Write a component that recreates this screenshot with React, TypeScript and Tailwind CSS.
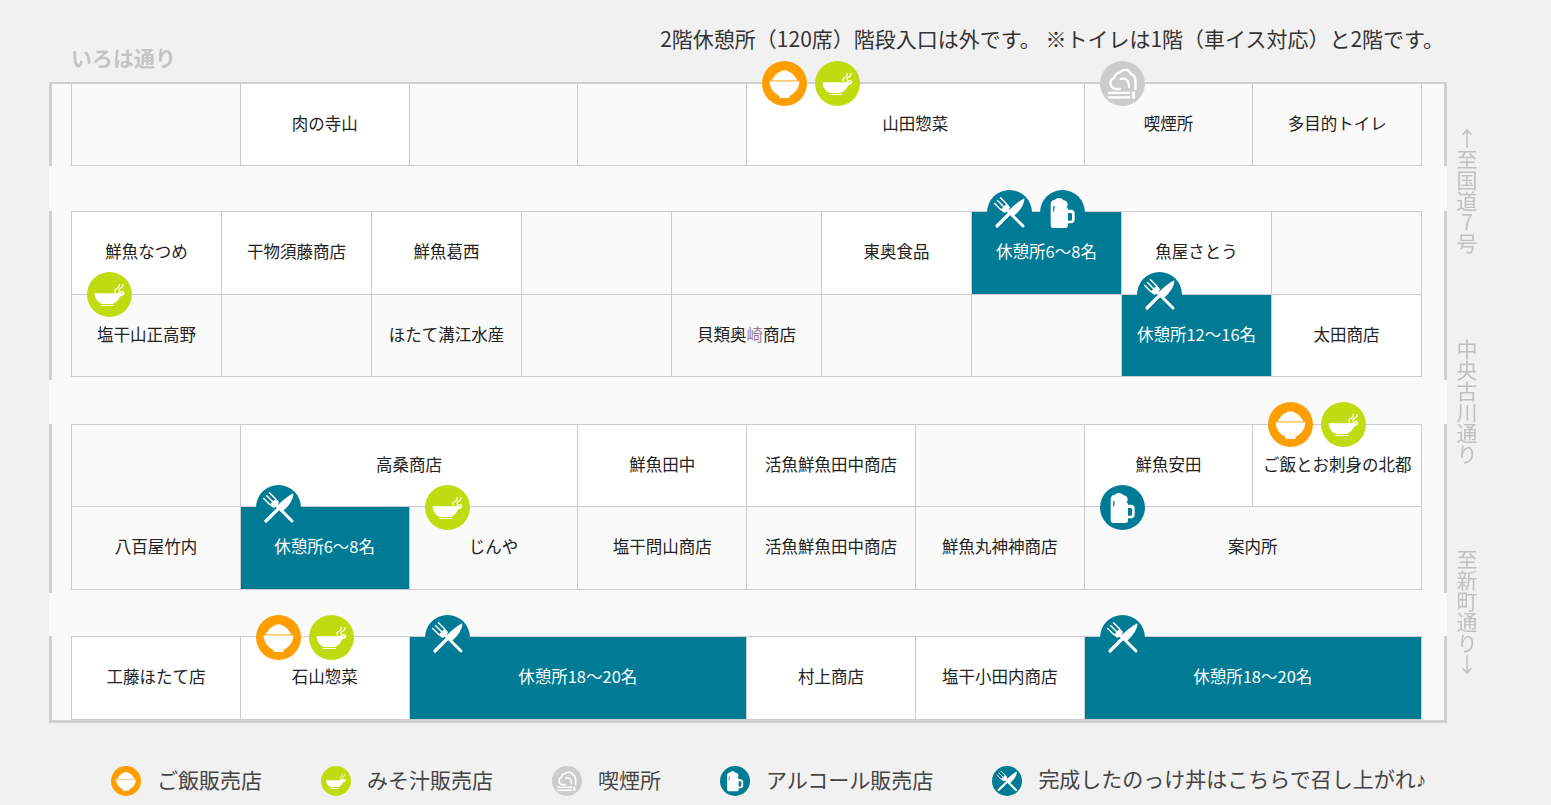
type IconKind = 'rice' | 'soup' | 'smoke' | 'beer' | 'fork'

const iconBg: Record<IconKind, string> = {
  rice: 'bg-[#ff9e00]',
  soup: 'bg-[#bfdc10]',
  smoke: 'bg-[#cccccc]',
  beer: 'bg-[#007b96]',
  fork: 'bg-[#007b96]'
}

function Glyph({ kind }: { kind: IconKind }) {
  if (kind === 'rice') {
    return (
      <svg viewBox="0 0 45 45" className="w-full h-full">
        <path fill="#fff" d="M10 19.500c.2-1.800 1-3 2.300-3.600.2-1.400 1-2.400 2.200-2.700.6-1.400 1.800-2.200 3-2 1-1.300 3-2 5-2s4 .7 5 2c1.200-.2 2.400.6 3 2 1.200.3 2 1.300 2.200 2.700 1.300.6 2.100 1.800 2.300 3.600z" />
        <path fill="#ffc772" d="M8 19.500h29v1H8z" />
        <path fill="#fff" d="M7.500 20.500h30c-.5 6.500-4 11.500-9.800 14.300l-.5 2.200h-9.400l-.5-2.200C11.500 32 8 27 7.500 20.500z" />
      </svg>
    )
  }
  if (kind === 'soup') {
    return (
      <svg viewBox="0 0 45 45" className="w-full h-full">
        <path fill="#fff" d="M7.500 21.300h20.800c2.100 0 3.200-.6 4.300-1.400 1.200-.9 3-1.300 4-.4 1.100 1 .9 2.700-.3 3.600-1 .8-2.100 1.200-3.300 1.400-1.300 3.600-4 6.300-7.700 7.500H15.200c-4.500-1.400-7.300-5.500-7.700-10.700zm26.100.5c1-.1 1.700-.5 2.200-1 .4-.5-.2-1-.9-.6-.5.3-.9.7-1.300.8z" />
        <path fill="#fff" d="M13.500 33h14c-.6.800-1.300 1-2.200 1h-9.600c-.9 0-1.700-.3-2.200-1z" />
        <path fill="none" stroke="#fff" strokeWidth="1.200" strokeLinecap="round" d="M28.500 20c-1.800-1.600 0-2.900 1.700-3.800 1.800-1 2.800-2.200 1.700-3.800M32.300 19c-1.200-1.400.4-2.300 1.700-3.100 1.400-.9 2.600-1.900 1.900-3.400" />
      </svg>
    )
  }
  if (kind === 'smoke') {
    return (
      <svg viewBox="0 0 45 45" className="w-full h-full">
        <path fill="none" stroke="#fff" strokeWidth="2.400" strokeLinecap="round" strokeLinejoin="round" d="M20 28h-3c-4 0-6.500-2.700-6.500-5.800 0-2.700 1.700-4.900 4-5.600.3-3 2.800-5 5.500-5 1.200-1.700 3-2.700 5-2.700 3 0 5.300 1.800 6 4.300 2.800.8 4.500 3.500 4.500 6.700v8" />
        <path fill="none" stroke="#fff" strokeWidth="2.200" strokeLinecap="round" d="M20.500 18c2.700-.8 5.700 0 7.200 2 1 1.300 1.300 3 1.300 6.500" />
        <path fill="#fff" d="M8 30.700h22v2.300H8zM8 35.300h22v2.300H8zM32 30.700h3v6.900h-3z" />
      </svg>
    )
  }
  if (kind === 'beer') {
    return (
      <svg viewBox="0 0 45 45" className="w-full h-full">
        <path fill="#fff" fillRule="evenodd" d="M10.700 14c0-2.500 2-4.200 4.300-4.200 1-1.300 2.600-1.800 4-1.800 1.800 0 3.400.9 4.300 2.300 2.500 0 4.400 1.800 4.400 3.900 0 1.300-.5 2.300-1.300 3.100.9.200 1.600.9 1.600 1.900v.5h3.200c2 0 3.500 1.500 3.500 3.500v6.500c0 2-1.500 3.500-3.500 3.500H28v2.300c0 1.300-1.100 2.400-2.400 2.400H13.100c-1.300 0-2.400-1.100-2.400-2.400zm17.300 9v7.800h2.500c.9 0 1.500-.6 1.500-1.500v-4.800c0-.9-.6-1.500-1.500-1.500z" />
        <path fill="none" stroke="#007b96" strokeWidth="1.300" strokeLinecap="round" d="M14 16.500c-.2 1.500-.3 3-.3 4.300" />
      </svg>
    )
  }
  return (
    <svg viewBox="0 0 45 45" className="w-full h-full">
      <path fill="none" stroke="#fff" strokeWidth="3" strokeLinecap="round" d="M18 18l18 18" />
      <path fill="none" stroke="#fff" strokeWidth="1.500" strokeLinecap="round" d="M10.500 10.500l6 6M13.500 7.700l6 6M7.700 13.500l6 6" />
      <path fill="#fff" d="M19.800 13.500l-6.300 6.300 2.800 2.500c.9.700 2 .6 2.800-.2l3.100-3.100c.8-.8.900-1.900.2-2.700z" />
      <path fill="none" stroke="#fff" strokeWidth="3.200" strokeLinecap="round" d="M10 36l14-14" />
      <path fill="#fff" d="M21.500 20.500C26.500 15.500 32 11 37.300 8.300c.4 5.500-4.300 13-11.300 18.200z" />
    </svg>
  )
}

function Badge({ kind, left, up }: { kind: IconKind; left: string; up: boolean }) {
  return (
    <span className={`absolute ${up ? 'top-[-23px]' : 'top-[-22px]'} ${left} z-10 w-[45px] h-[45px] rounded-full ${iconBg[kind]}`}>
      <Glyph kind={kind} />
    </span>
  )
}

type CellProps = {
  label?: React.ReactNode
  span?: string
  tone?: 'white' | 'plain' | 'teal'
  icons?: IconKind[]
  up?: boolean
}

function Cell({ label, span = '', tone = 'plain', icons = [], up = false }: CellProps) {
  const toneClass =
    tone === 'white' ? 'bg-white text-[#222]' : tone === 'teal' ? 'bg-[#007b96] text-white' : 'bg-[#fafafa] text-[#222]'
  return (
    <div className={`relative flex items-center justify-center pb-[3px] border-r border-b border-[#cccccc] ${toneClass} ${span}`}>
      {icons[0] && <Badge kind={icons[0]} left="left-[15px]" up={up} />}
      {icons[1] && <Badge kind={icons[1]} left="left-[68px]" up={up} />}
      {label}
    </div>
  )
}

function LegendItem({ kind, children, className = '' }: { kind: IconKind; children: React.ReactNode; className?: string }) {
  return (
    <div className={`flex items-center gap-[16px] ${className}`}>
      <span className={`w-[30px] h-[30px] rounded-full ${iconBg[kind]}`}>
        <Glyph kind={kind} />
      </span>
      <span className="pb-[3px]">{children}</span>
    </div>
  )
}

export default function App() {
  return (
    <div className="w-[1551px] h-[805px] overflow-hidden bg-[#f1f1f1] font-['Noto_Sans_CJK_JP','Noto_Sans',sans-serif] text-[16.5px] leading-none">
      <div className="flex justify-end pt-[25px] pr-[107px] h-[82px] text-[21px] leading-[26px] text-[#333]">
        <p>2階休憩所（120席）階段入口は外です。 ※トイレは1階（車イス対応）と2階です。</p>
      </div>

      <div className="relative ml-[49px] w-[1398px] border-[3px] border-t-2 border-[#d0d0d0] bg-[#fafafa]">
        <span className="absolute left-[19px] top-[-40px] text-[21px] font-bold leading-[26px] text-[#c4c4c4] blur-[0.6px]">いろは通り</span>

        <div className="pl-[19px] pr-[22px]">
          <div className="grid grid-cols-8 h-[82px] border-l border-[#cccccc]">
            <Cell />
            <Cell tone="white" label="肉の寺山" />
            <Cell />
            <Cell />
            <Cell tone="white" span="col-span-2" label="山田惣菜" icons={['rice', 'soup']} up />
            <Cell label="喫煙所" icons={['smoke']} up />
            <Cell label="多目的トイレ" />
          </div>

          <div className="h-[45px] bg-[#fafafa] ml-[-22px] mr-[-25px]" />

          <div className="grid grid-cols-9 grid-rows-2 h-[166px] border-l border-t border-[#cccccc]">
            <Cell tone="white" label="鮮魚なつめ" />
            <Cell tone="white" label="干物須藤商店" />
            <Cell tone="white" label="鮮魚葛西" />
            <Cell />
            <Cell />
            <Cell tone="white" label="東奥食品" />
            <Cell tone="teal" label="休憩所6～8名" icons={['fork', 'beer']} />
            <Cell tone="white" label="魚屋さとう" />
            <Cell />
            <Cell label="塩干山正高野" icons={['soup']} up />
            <Cell />
            <Cell label="ほたて溝江水産" />
            <Cell />
            <Cell label={<span>貝類奥<span className="text-[#a07a9a]">崎</span>商店</span>} />
            <Cell />
            <Cell />
            <Cell tone="teal" label="休憩所12～16名" icons={['fork']} up />
            <Cell tone="white" label="太田商店" />
          </div>

          <div className="mt-[3px] h-[44px] bg-[#fafafa] ml-[-22px] mr-[-25px]" />

          <div className="grid grid-cols-8 grid-rows-[82px_83px] h-[166px] border-l border-t border-[#cccccc]">
            <Cell />
            <Cell tone="white" span="col-span-2" label="高桑商店" />
            <Cell tone="white" label="鮮魚田中" />
            <Cell tone="white" label="活魚鮮魚田中商店" />
            <Cell />
            <Cell tone="white" label="鮮魚安田" />
            <Cell tone="white" label="ご飯とお刺身の北都" icons={['rice', 'soup']} up />
            <Cell label="八百屋竹内" />
            <Cell tone="teal" label="休憩所6～8名" icons={['fork']} />
            <Cell label="じんや" icons={['soup']} />
            <Cell label="塩干問山商店" />
            <Cell label="活魚鮮魚田中商店" />
            <Cell label="鮮魚丸神神商店" />
            <Cell span="col-span-2" label="案内所" icons={['beer']} />
          </div>

          <div className="mt-[3px] h-[43px] bg-[#fafafa] ml-[-22px] mr-[-25px]" />

          <div className="grid grid-cols-8 h-[84px] border-l border-t border-[#cccccc]">
            <Cell tone="white" label="工藤ほたて店" />
            <Cell tone="white" label="石山惣菜" icons={['rice', 'soup']} />
            <Cell tone="teal" span="col-span-2" label="休憩所18～20名" icons={['fork']} />
            <Cell tone="white" label="村上商店" />
            <Cell tone="white" label="塩干小田内商店" />
            <Cell tone="teal" span="col-span-2" label="休憩所18～20名" icons={['fork']} />
          </div>
        </div>

        <div className="absolute left-full top-[44px] ml-[10px] flex flex-col items-center w-[26px] text-[21px] leading-[26px] text-[#c0c0c0] blur-[0.3px]">
          <span className="h-[127px] [writing-mode:vertical-rl] [text-orientation:upright]">↑至国道7号</span>
          <span className="mt-[84px] h-[127px] [writing-mode:vertical-rl] [text-orientation:upright]">中央古川通り</span>
          <span className="mt-[83px] h-[127px] [writing-mode:vertical-rl] [text-orientation:upright]">至新町通り↓</span>
        </div>
      </div>

      <div className="flex items-center mt-[40px] pl-[111px] text-[21px] leading-[30px] text-[#444]">
        <LegendItem kind="rice">ご飯販売店</LegendItem>
        <LegendItem kind="soup" className="ml-[59px]">みそ汁販売店</LegendItem>
        <LegendItem kind="smoke" className="ml-[59px]">喫煙所</LegendItem>
        <LegendItem kind="beer" className="ml-[59px]">アルコール販売店</LegendItem>
        <LegendItem kind="fork" className="ml-[59px]">
          完成したのっけ丼はこちらで召し上がれ<span className="font-['Liberation_Sans']">♪</span>
        </LegendItem>
      </div>
    </div>
  )
}
